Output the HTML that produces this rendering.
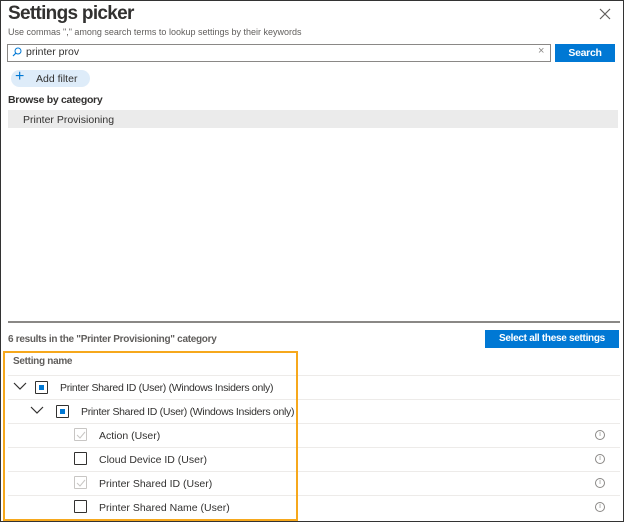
<!DOCTYPE html><html><head><style>
body{margin:0;width:624px;height:522px;overflow:hidden;background:#fff;font-family:"Liberation Sans",sans-serif;color:#323130;position:relative}
.a{position:absolute}
.frame{left:0;top:0;width:622px;height:520px;border:1px solid #333}
.t{font-size:10.5px;white-space:nowrap}
.row{left:8px;width:612px;height:1px;background:#edebe9}
.cb{width:11px;height:11px;border:1px solid #323130;border-radius:1px;background:#fff}
.cb.g{border-color:#c8c6c4}
.info{width:8px;height:8px;border:1px solid #8a8886;border-radius:50%;left:595px;font-size:7px;color:#8a8886;text-align:center;line-height:8px}
.b{font-weight:bold;letter-spacing:-0.3px}
</style></head><body>
<div class="a frame"></div>
<div class="a" style="left:8px;top:3px;font-size:19px;font-weight:bold;letter-spacing:-0.7px;color:#323130">Settings picker</div>
<div class="a t" style="left:8px;top:27px;font-size:9px;color:#605e5c">Use commas "," among search terms to lookup settings by their keywords</div>
<div class="a" style="left:7px;top:44px;width:542px;height:16px;border:1px solid #8a8886"></div>
<svg class="a" style="left:12px;top:47px" width="10" height="10" viewBox="0 0 10 10"><circle cx="6" cy="4" r="3" fill="none" stroke="#0078d4" stroke-width="1"/><path d="M4 6L1 9" stroke="#0078d4" stroke-width="1.2"/></svg>
<div class="a t" style="left:26px;top:46px;font-size:10.5px">printer prov</div>
<div class="a" style="left:538px;top:45px;font-size:11px;color:#8a8886">×</div>
<div class="a b" style="left:555px;top:44px;width:60px;height:18px;background:#0078d4;color:#fff;font-size:10.5px;text-align:center;line-height:18px">Search</div>
<div class="a" style="left:11px;top:70px;width:79px;height:17px;background:#deecf9;border-radius:9px"></div>
<div class="a" style="left:15px;top:68px;font-size:16px;color:#0078d4">+</div>
<div class="a t" style="left:36px;top:73px">Add filter</div>
<div class="a t b" style="left:8px;top:94px;font-size:10.5px;color:#323130">Browse by category</div>
<div class="a" style="left:8px;top:110px;width:610px;height:18px;background:#ebebeb"></div>
<div class="a t" style="left:23px;top:114px">Printer Provisioning</div>
<div class="a" style="left:8px;top:321px;width:612px;height:2px;background:#8a8886"></div>
<div class="a t b" style="left:8px;top:334px;font-size:10px;color:#605e5c">6 results in the "Printer Provisioning" category</div>
<div class="a b" style="left:485px;top:330px;width:134px;height:18px;background:#0078d4;color:#fff;font-size:10px;text-align:center;line-height:18px">Select all these settings</div>
<div class="a t b" style="left:13px;top:356px;font-size:10px;color:#605e5c">Setting name</div>
<div class="a row" style="top:375px"></div><div class="a row" style="top:399px"></div><div class="a row" style="top:423px"></div><div class="a row" style="top:447px"></div><div class="a row" style="top:471px"></div><div class="a row" style="top:495px"></div>
<svg class="a" style="left:13px;top:382px" width="14" height="9"><path d="M1 1L7 7L13 1" fill="none" stroke="#323130" stroke-width="1.2"/></svg>
<div class="a cb" style="left:35px;top:381px"></div><div class="a" style="left:39px;top:385px;width:5px;height:5px;background:#0078d4"></div>
<div class="a t" style="left:60px;top:382px;letter-spacing:-0.3px">Printer Shared ID (User) (Windows Insiders only)</div>
<svg class="a" style="left:30px;top:406px" width="14" height="9"><path d="M1 1L7 7L13 1" fill="none" stroke="#323130" stroke-width="1.2"/></svg>
<div class="a cb" style="left:56px;top:405px"></div><div class="a" style="left:60px;top:409px;width:5px;height:5px;background:#0078d4"></div>
<div class="a t" style="left:81px;top:406px;letter-spacing:-0.3px">Printer Shared ID (User) (Windows Insiders only)</div>
<div class="a cb g" style="left:74px;top:428px"></div><svg class="a" style="left:76px;top:430px" width="10" height="10"><path d="M1 5L4 8L9 2" fill="none" stroke="#c8c6c4" stroke-width="1"/></svg>
<div class="a t" style="left:99px;top:430px">Action (User)</div>
<div class="a cb" style="left:74px;top:452px"></div>
<div class="a t" style="left:99px;top:454px">Cloud Device ID (User)</div>
<div class="a cb g" style="left:74px;top:476px"></div><svg class="a" style="left:76px;top:478px" width="10" height="10"><path d="M1 5L4 8L9 2" fill="none" stroke="#c8c6c4" stroke-width="1"/></svg>
<div class="a t" style="left:99px;top:478px">Printer Shared ID (User)</div>
<div class="a cb" style="left:74px;top:500px"></div>
<div class="a t" style="left:99px;top:502px">Printer Shared Name (User)</div>
<div class="a info" style="top:430px">i</div><div class="a info" style="top:454px">i</div><div class="a info" style="top:478px">i</div><div class="a info" style="top:502px">i</div>
<div class="a" style="left:3px;top:351px;width:291px;height:166px;border:2px solid #f6a81c"></div>
<svg class="a" style="left:599px;top:8px" width="12" height="12"><path d="M1 1L11 11M11 1L1 11" stroke="#605e5c" stroke-width="1.2"/></svg>
</body></html>
